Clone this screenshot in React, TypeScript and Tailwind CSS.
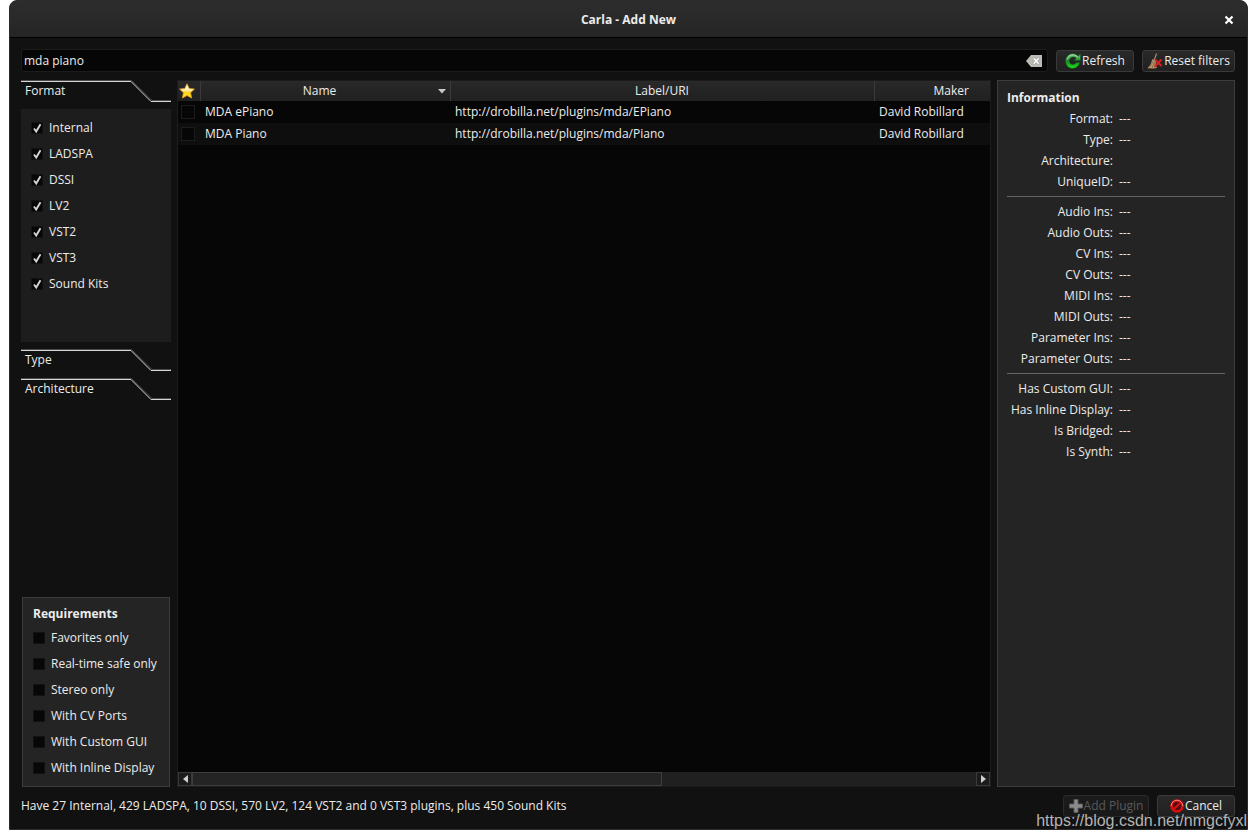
import { useState, type ReactNode } from 'react';

const formats = ['Internal', 'LADSPA', 'DSSI', 'LV2', 'VST2', 'VST3', 'Sound Kits'];

const requirements = [
  'Favorites only',
  'Real-time safe only',
  'Stereo only',
  'With CV Ports',
  'With Custom GUI',
  'With Inline Display',
];

const plugins = [
  { name: 'MDA ePiano', uri: 'http://drobilla.net/plugins/mda/EPiano', maker: 'David Robillard' },
  { name: 'MDA Piano', uri: 'http://drobilla.net/plugins/mda/Piano', maker: 'David Robillard' },
];

const info = [
  [
    ['Format:', '---'],
    ['Type:', '---'],
    ['Architecture:', ''],
    ['UniqueID:', '---'],
  ],
  [
    ['Audio Ins:', '---'],
    ['Audio Outs:', '---'],
    ['CV Ins:', '---'],
    ['CV Outs:', '---'],
    ['MIDI Ins:', '---'],
    ['MIDI Outs:', '---'],
    ['Parameter Ins:', '---'],
    ['Parameter Outs:', '---'],
  ],
  [
    ['Has Custom GUI:', '---'],
    ['Has Inline Display:', '---'],
    ['Is Bridged:', '---'],
    ['Is Synth:', '---'],
  ],
];

function StarIcon() {
  return (
    <svg width="16" height="16" viewBox="0 0 16 16">
      <defs>
        <linearGradient id="star" x1="0" y1="0" x2="0" y2="1">
          <stop offset="0" stopColor="#fff" />
          <stop offset="0.45" stopColor="#fff0b0" />
          <stop offset="0.6" stopColor="#ffd21c" />
          <stop offset="1" stopColor="#fff02a" />
        </linearGradient>
      </defs>
      <path
        d="M8 .8l2.200 4.700 5.200.6-3.800 3.600 1 5.300L8 12.500 3.400 15l1-5.300L.6 6.100l5.200-.6z"
        fill="url(#star)"
        stroke="#e89a1a"
        strokeWidth="0.8"
        strokeLinejoin="round"
      />
    </svg>
  );
}

function RefreshIcon() {
  return (
    <svg width="16" height="16" viewBox="0 0 16 16">
      <defs>
        <linearGradient id="green" x1="0" y1="0" x2="0" y2="1">
          <stop offset="0" stopColor="#7fc98a" />
          <stop offset="0.5" stopColor="#1f8a2b" />
          <stop offset="1" stopColor="#1fe01a" />
        </linearGradient>
      </defs>
      <path
        d="M15.500 1v6.600H9l2.200-2.200C9.600 3.700 6.900 3.700 5.400 5.300c-1.500 1.600-1.400 4 .1 5.300 1.700 1.500 4.500 1.100 5.800-1h3.600c-1 3.500-3.900 5.900-7.300 5.900C3.500 15.500.5 12.200.5 8.100S3.600.7 7.700.7c2.100 0 4.100.9 5.500 2.500z"
        fill="url(#green)"
        stroke="#0c5c12"
        strokeWidth="0.6"
      />
      <path d="M2 6.500C3 3 6 1.700 8.500 1.900c2 .2 3.300 1.100 4.500 2.400" fill="none" stroke="#a8dcae" strokeWidth="0.8" />
    </svg>
  );
}

function BroomIcon() {
  return (
    <svg width="16" height="16" viewBox="0 0 16 16">
      <path d="M9.600.5L7.200 7" stroke="#a08468" strokeWidth="1.3" fill="none" />
      <path d="M5.500 6.300l3.600 1.300-.3 3.400 1 4-3 .5-6.300-.3 3-3.700z" fill="#c09a6c" />
      <path d="M6 8.500l-3.500 6M7.200 9l-2 6M8.200 9.500l-.5 5.500" stroke="#765638" strokeWidth="0.7" />
      <path d="M5.200 6.500l4 1.500-.3 1.200-4.300-1.600z" fill="#8a8a86" />
      <path d="M8.600 7l5.400 5.500M14 7l-5.600 6" stroke="#d81f1c" strokeWidth="2" strokeLinecap="round" />
    </svg>
  );
}

function ClearIcon() {
  return (
    <svg width="16" height="12" viewBox="0 0 16 12">
      <path d="M5 0h11v12H5L0 6z" fill="#b9bbb4" />
      <path d="M7.500 3l5.500 6M13 3L7.500 9" stroke="#9d9f98" strokeWidth="3" />
      <path d="M7.700 3.200l5 5.600M12.700 3.200l-5 5.600" stroke="#fff" strokeWidth="1.6" />
    </svg>
  );
}

function PlusIcon() {
  return (
    <svg width="14" height="14" viewBox="0 0 14 14">
      <path d="M5 .5h4V5h4.500v4H9v4.500H5V9H.5V5H5z" fill="#8c8c8c" stroke="#5a5a5a" />
    </svg>
  );
}

function CancelIcon() {
  return (
    <svg width="14" height="14" viewBox="0 0 14 14">
      <circle cx="7" cy="7" r="6.800" fill="#d40f0f" />
      <circle cx="7" cy="7" r="4" fill="#4a0d0d" />
      <path d="M3.500 10.500l7-7" stroke="#d40f0f" strokeWidth="2.4" />
      <path d="M1.200 7A5.800 5.800 0 0 1 12.800 7" fill="none" stroke="#f08080" strokeWidth="1" />
    </svg>
  );
}

function SectionTab({ label, open, onClick }: { label: string; open?: boolean; onClick?: () => void }) {
  return (
    <button type="button" aria-expanded={!!open} onClick={onClick} className="relative block h-[22px] w-full text-left">
      <svg className="absolute inset-0" width="150" height="22" viewBox="0 0 150 22" fill="none">
        <path d="M0 .5H110.500L131 20.500H150" stroke="#4c4c4c" />
        <path d="M0 1.500H110L130 21.500H150" stroke="#d6d6d6" />
      </svg>
      <span className="relative block px-1 leading-5">{label}</span>
    </button>
  );
}

function CheckRow({ label, checked }: { label: string; checked?: boolean }) {
  return (
    <label className="flex h-[26px] items-center gap-[6px]">
      <span className="grid">
        <input
          type="checkbox"
          defaultChecked={checked}
          className="peer col-start-1 row-start-1 size-3 appearance-none border border-[#121212] bg-[#070707]"
        />
        <svg
          className="pointer-events-none invisible col-start-1 row-start-1 peer-checked:visible"
          width="12"
          height="12"
          viewBox="0 0 12 12"
          fill="none"
        >
          <path d="M3 6.500l2.200 3L9.500 2.200" stroke="#d4d4d4" strokeWidth="1.9" />
        </svg>
      </span>
      {label}
    </label>
  );
}

function ToolButton({ icon, children, disabled, className }: { icon: ReactNode; children: ReactNode; disabled?: boolean; className: string }) {
  return (
    <button
      type="button"
      disabled={disabled}
      className={`flex h-[22px] shrink-0 items-center justify-center gap-px rounded-[3px] border border-[#3a3a3a] bg-linear-to-b from-[#292929] to-[#202020] disabled:border-[#2a2a2a] disabled:from-[#1c1c1c] disabled:to-[#181818] disabled:text-[#5a5a5a] ${className}`}
    >
      {icon}
      {children}
    </button>
  );
}

function PluginTable() {
  return (
    <div className="flex min-w-0 flex-1 flex-col border border-[#1c1c1c] bg-[#060606]">
      <div className="min-h-0 flex-1 overflow-hidden">
        <table className="w-[850px] table-fixed border-collapse">
          <colgroup>
            <col className="w-[22px]" />
            <col className="w-[250px]" />
            <col className="w-[424px]" />
            <col className="w-[154px]" />
          </colgroup>
          <thead>
            <tr className="h-5 bg-linear-to-b from-[#292929] to-[#202020]">
              <th className="border-r border-[#3a3a3a] p-0 pl-px">
                <StarIcon />
              </th>
              <th className="border-r border-[#3a3a3a] p-0 font-normal">
                <div className="flex items-center">
                  <span className="flex-1 pl-1">Name</span>
                  <svg width="15" height="5" viewBox="0 0 15 5">
                    <path d="M3 0h8L7 4.500z" fill="#c8c8c8" />
                  </svg>
                </div>
              </th>
              <th className="border-r border-[#3a3a3a] p-0 font-normal">Label/URI</th>
              <th className="p-0 font-normal">Maker</th>
            </tr>
          </thead>
          <tbody>
            {plugins.map((p) => (
              <tr key={p.name} className="h-[22px] even:bg-[#0e0e0e]">
                <td className="p-0 pl-[3px]">
                  <input
                    type="checkbox"
                    aria-label={`Favorite ${p.name}`}
                    className="block size-[14px] appearance-none border border-[#1c1c1c] bg-[#060606]"
                  />
                </td>
                <td className="p-0 pl-[5px]">{p.name}</td>
                <td className="p-0 pl-[5px]">{p.uri}</td>
                <td className="p-0 pl-[5px]">{p.maker}</td>
              </tr>
            ))}
          </tbody>
        </table>
      </div>
      <div className="flex h-[14px] bg-[#202020]">
        <button type="button" aria-label="Scroll left" className="grid w-[14px] place-items-center border border-[#3a3a3a] bg-[#1b1b1b]">
          <svg width="5" height="8" viewBox="0 0 5 8">
            <path d="M5 0v8L0 4z" fill="#d0d0d0" />
          </svg>
        </button>
        <div className="flex-1">
          <div className="h-full w-3/5 border border-[#3e3e3e] bg-[#242424]" />
        </div>
        <button type="button" aria-label="Scroll right" className="grid w-[14px] place-items-center border border-[#3a3a3a] bg-[#1b1b1b]">
          <svg width="5" height="8" viewBox="0 0 5 8">
            <path d="M0 0v8l5-4z" fill="#d0d0d0" />
          </svg>
        </button>
      </div>
    </div>
  );
}

export default function App() {
  const [search, setSearch] = useState('mda piano');
  const [section, setSection] = useState('Format');

  return (
    <div className="h-screen bg-white px-[9px] pb-[9px] font-['Open_Sans','Noto_Sans',sans-serif] text-[12px] leading-4 text-[#ececec]">
      <div className="relative flex h-full flex-col overflow-hidden rounded-t-lg border border-[#2b2b2b] bg-[#111]">
        <header className="flex h-[37px] shrink-0 items-center border-b border-black bg-linear-to-b from-[#2d2d2d] to-[#252525] pt-px">
          <h1 className="flex-1 pl-9 text-center font-bold">Carla - Add New</h1>
          <button type="button" aria-label="Close" className="grid w-9 place-items-center">
            <svg width="10" height="10" viewBox="0 0 10 10">
              <path d="M1.500 1.500l7 7M8.500 1.500l-7 7" stroke="#fff" strokeWidth="2.2" />
            </svg>
          </button>
        </header>

        <div className="flex min-h-0 flex-1 flex-col pt-[11px] pr-3 pb-3 pl-[11px]">
          <div className="flex shrink-0 items-center gap-2">
            <div className="flex h-[23px] flex-1 items-center rounded-[3px] border border-[#1c1c1c] bg-[#060606] pr-[5px]">
              <input
                type="text"
                aria-label="Search plugins"
                value={search}
                onChange={(e) => setSearch(e.target.value)}
                className="min-w-0 flex-1 bg-transparent px-[2px] outline-none"
              />
              <button type="button" aria-label="Clear search" onClick={() => setSearch('')}>
                <ClearIcon />
              </button>
            </div>
            <ToolButton icon={<RefreshIcon />} className="w-[78px]">
              Refresh
            </ToolButton>
            <ToolButton icon={<BroomIcon />} className="w-[93px]">
              Reset filters
            </ToolButton>
          </div>

          <div className="mt-2 flex min-h-0 flex-1 gap-[6px]">
            <aside className="flex w-[150px] shrink-0 flex-col gap-[7px]">
              <SectionTab label="Format" open={section === 'Format'} onClick={() => setSection('Format')} />
              <div className="h-[233px] bg-[#1d1d1d] px-[10px] pt-[6px]">
                {formats.map((f) => (
                  <CheckRow key={f} label={f} checked />
                ))}
              </div>
              <SectionTab label="Type" open={section === 'Type'} onClick={() => setSection('Type')} />
              <SectionTab label="Architecture" open={section === 'Architecture'} onClick={() => setSection('Architecture')} />
              <fieldset className="mt-auto mr-px ml-px border border-[#3c3c3c] bg-[#242424] px-[10px] pt-2 pb-[5px]">
                <h2 className="pb-[3px] font-bold">Requirements</h2>
                {requirements.map((r) => (
                  <CheckRow key={r} label={r} />
                ))}
              </fieldset>
            </aside>

            <PluginTable />

            <section className="w-[238px] shrink-0 border border-[#3c3c3c] bg-[#242424] px-[9px] pt-[6px]">
              <h2 className="leading-[21px] font-bold">Information</h2>
              {info.map((group, i) => (
                <dl key={i} className={i > 0 ? 'mt-1 border-t border-[#666] pt-1' : ''}>
                  {group.map(([label, value]) => (
                    <div key={label} className="flex gap-[6px] leading-[21px]">
                      <dt className="w-[106px] text-right whitespace-nowrap">{label}</dt>
                      <dd>{value}</dd>
                    </div>
                  ))}
                </dl>
              ))}
            </section>
          </div>

          <footer className="mt-2 flex shrink-0 items-center gap-2">
            <p className="flex-1">Have 27 Internal, 429 LADSPA, 10 DSSI, 570 LV2, 124 VST2 and 0 VST3 plugins, plus 450 Sound Kits</p>
            <ToolButton icon={<PlusIcon />} disabled className="w-[86px]">
              Add Plugin
            </ToolButton>
            <ToolButton icon={<CancelIcon />} className="w-[78px]">
              Cancel
            </ToolButton>
          </footer>
        </div>

        <span className="absolute right-0 bottom-0 font-['Liberation_Sans',sans-serif] text-[16px] leading-4 text-[#b4b4b4]">
          https://blog.csdn.net/nmgcfyxl
        </span>
      </div>
    </div>
  );
}
